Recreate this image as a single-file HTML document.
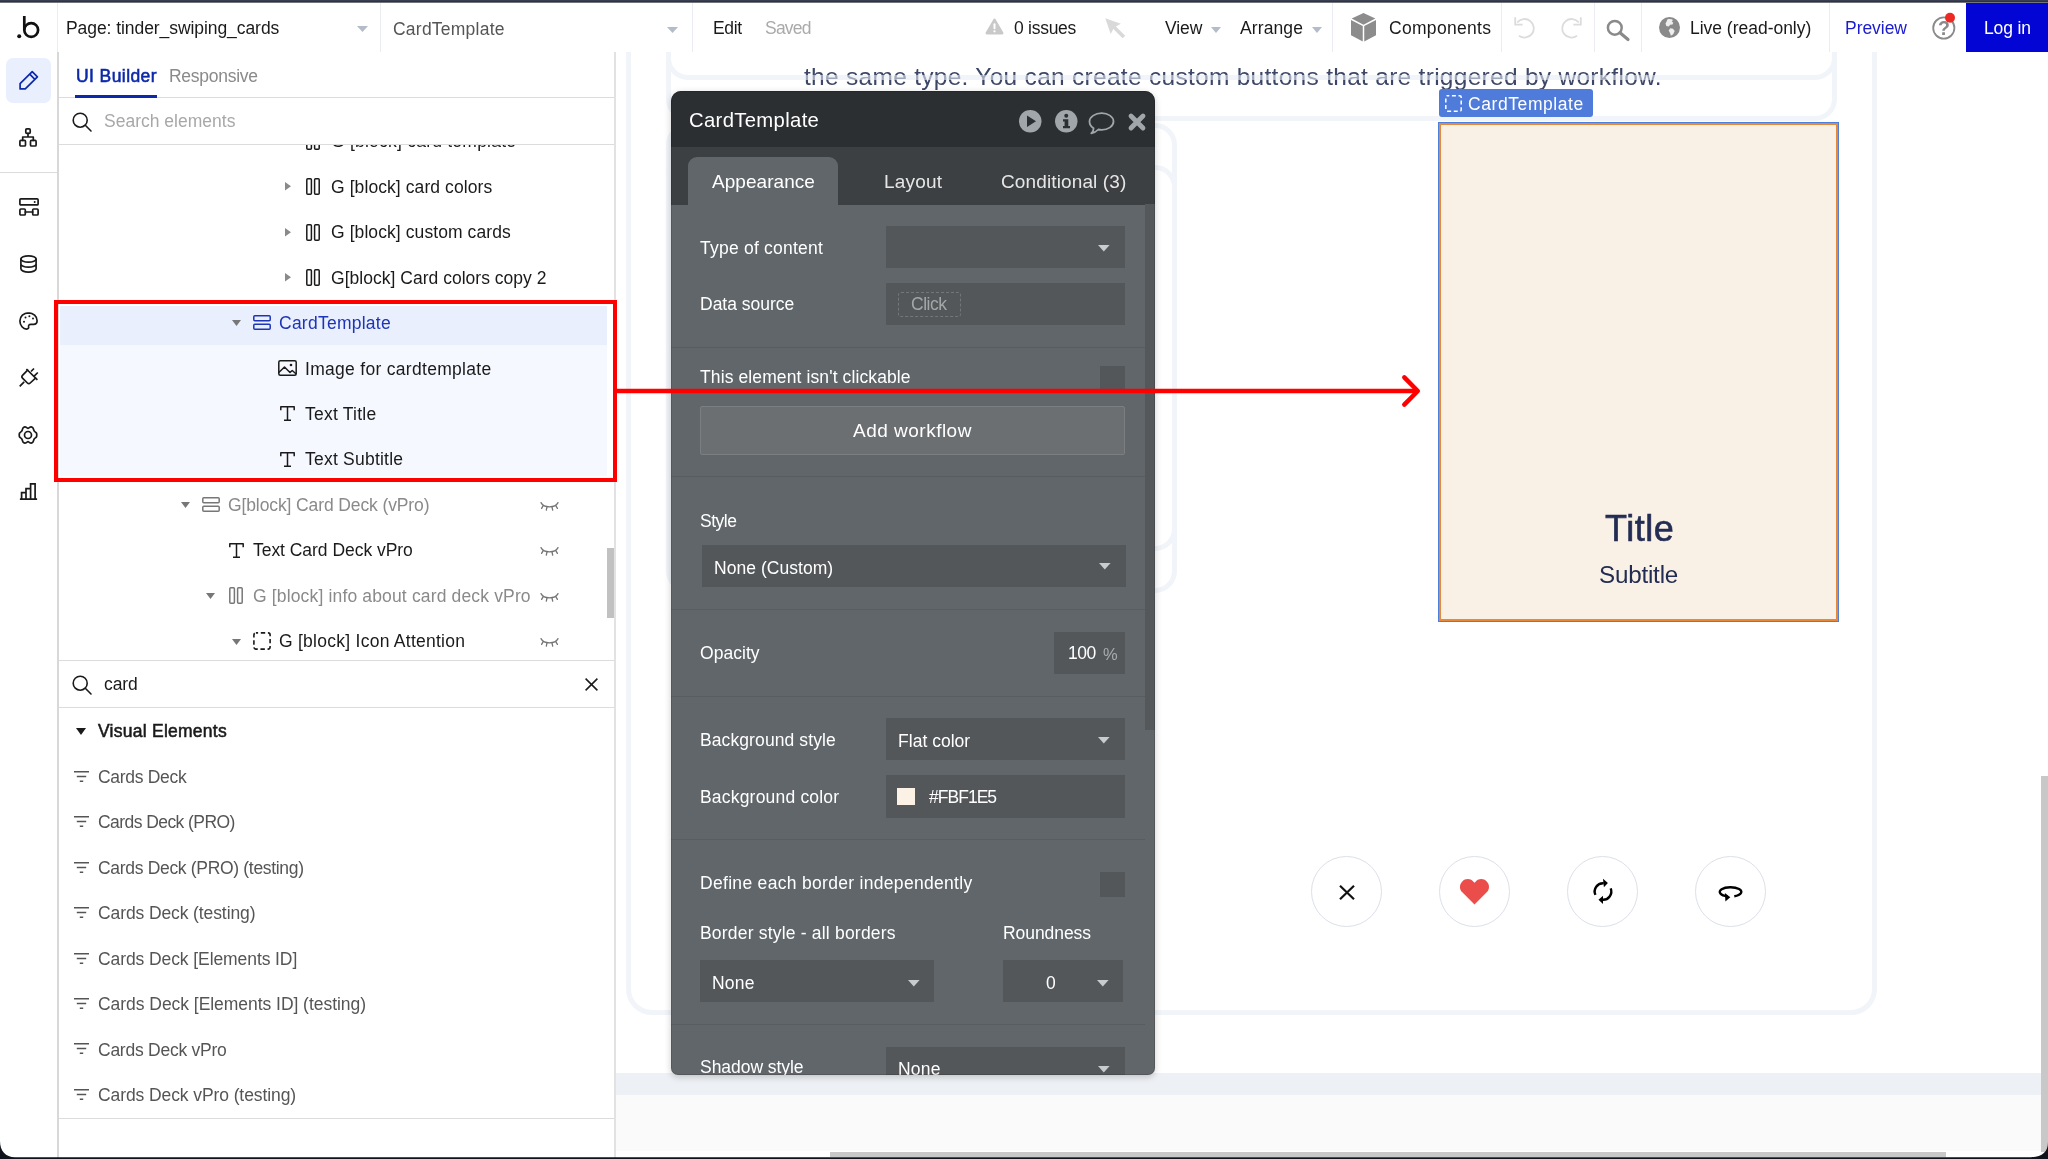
<!DOCTYPE html>
<html lang="en"><head><meta charset="utf-8"><title>Bubble editor - tinder_swiping_cards</title>
<style>
*{box-sizing:border-box;margin:0;padding:0}
html,body{width:2048px;height:1159px;overflow:hidden;background:#fff}
body{-webkit-font-smoothing:antialiased;font-family:"Liberation Sans",sans-serif;position:relative;color:#1a1a1a}
.t{position:absolute;will-change:transform;white-space:nowrap;line-height:1;display:block}
.a{position:absolute;display:block}
svg{position:absolute;overflow:visible}
.vd{position:absolute;top:3px;height:49px;width:1px;background:#e9edf1}
</style></head><body>
<!-- canvas -->
<div class="a" style="left:615px;top:52px;width:1433px;height:1021px;background:#fff"></div><div class="a" style="left:615px;top:1072.500px;width:1433px;height:23px;background:#edf0f4"></div><div class="a" style="left:615px;top:1095px;width:1433px;height:57px;background:#fafafa"></div><div class="a" style="left:615px;top:1151px;width:1433px;height:8px;background:#fff"></div><div class="a" style="left:626px;top:-40px;width:1251px;height:1055px;border:5px solid #f1f4f9;border-radius:0 0 26px 26px"></div><div class="a" style="left:666px;top:-40px;width:1171px;height:120px;border:5px solid #f1f4f9;border-radius:0 0 22px 22px"></div><div class="a" style="left:666px;top:-40px;width:1171px;height:161px;border:5px solid #f1f4f9;border-radius:0 0 22px 22px"></div><div class="a" style="left:666px;top:123px;width:511px;height:470px;border:5px solid #f1f4f9;border-radius:22px"></div><div class="a" style="left:666px;top:165px;width:511px;height:386px;border:5px solid #f1f4f9;border-radius:22px"></div><span class="t" style="left:803.5px;top:64.5px;font-size:24.50px;color:#3c4767;letter-spacing:0.284px;">the same type. You can create custom buttons that are triggered by workflow.</span><div class="a" style="left:690px;top:75px;width:1125px;height:5px;background:rgba(241,244,249,.55)"></div><div class="a" style="left:1439px;top:89px;width:154px;height:28px;background:#4f7bdb;border-radius:3px"></div><svg style="left:1445px;top:95px" width="17" height="17" viewBox="0 0 17 17"><rect x=".8" y=".8" width="15.400" height="15.400" rx="1.500" stroke="#fff" stroke-width="1.500" fill="none" stroke-dasharray="4 2.600" stroke-dashoffset="2"/></svg><span class="t" style="left:1468.2px;top:95.6px;font-size:17.50px;color:#fff;letter-spacing:0.578px;">CardTemplate</span><div class="a" style="left:1437.500px;top:121.500px;width:401.500px;height:500.500px;background:#e8893a"></div><div class="a" style="left:1437.500px;top:121.500px;width:401.500px;height:500.500px;border:1.500px solid #4a7fe0"></div><div class="a" style="left:1440.500px;top:124.500px;width:395.500px;height:494.500px;background:#faf1e6"></div><span class="t" style="left:1604.5px;top:510.6px;font-size:36.00px;color:#232c52;letter-spacing:0.531px;-webkit-text-stroke:.6px #232c52;">Title</span><span class="t" style="left:1599.0px;top:563.1px;font-size:24.20px;color:#232c52;letter-spacing:-0.203px;">Subtitle</span><div class="a" style="left:1311.2px;top:855.800px;width:70.800px;height:70.800px;border:1.600px solid #dde0e9;border-radius:50%;background:#fff"></div><div class="a" style="left:1439.4px;top:855.800px;width:70.800px;height:70.800px;border:1.600px solid #dde0e9;border-radius:50%;background:#fff"></div><div class="a" style="left:1567.3px;top:855.800px;width:70.800px;height:70.800px;border:1.600px solid #dde0e9;border-radius:50%;background:#fff"></div><div class="a" style="left:1695.4px;top:855.800px;width:70.800px;height:70.800px;border:1.600px solid #dde0e9;border-radius:50%;background:#fff"></div><svg style="left:1339px;top:884.500px" width="16" height="15" viewBox="0 0 16 15"><path d="M1 .8L15 14.200M15 .8L1 14.200" stroke="#111" stroke-width="2.200"/></svg><svg style="left:1460.300px;top:879px" width="29" height="25.500" viewBox="0 0 29 25.500"><path d="M14.500 25.500L2.300 13.300C-.8 10.200-.8 5.500 2.300 2.400 5.400-.7 10.100-.7 13.200 2.400L14.500 3.700 15.800 2.400C18.900-.7 23.600-.7 26.700 2.400 29.800 5.500 29.800 10.200 26.700 13.300Z" fill="#eb4d4b"/></svg><svg style="left:1592.700px;top:878.200px" width="20" height="27" viewBox="0 0 20 27"><g stroke="#000" stroke-width="2.400" fill="none"><path d="M2.420 16.880A8.300 8.300 0 0 1 10.720 5.230"/><path d="M17.700 10.400A8.300 8.300 0 0 1 9.280 21.770"/></g><path d="M10 .8L14.900 5 10.900 9.200Z" fill="#000"/><path d="M10 17.800L5.500 21.800 10 26Z" fill="#000"/></svg><svg style="left:1717.100px;top:884.700px" width="24" height="17" viewBox="0 0 24 17"><path d="M17.300 11.300A10.800 4.700 0 1 0 10.500 11.400" stroke="#000" stroke-width="2.400" fill="none"/><path d="M7.900 8.100L13.300 12.300 8.400 16.600Z" fill="#000"/></svg><div class="a" style="left:2041px;top:776px;width:7px;height:376px;background:#c8c8c8"></div><div class="a" style="left:830px;top:1152px;width:1116px;height:5px;background:#c8c8c8"></div>
<!-- left panel -->
<div class="a" style="left:58px;top:52px;width:556px;height:1107px;background:#fff"></div><div class="a" style="left:614.200px;top:52px;width:1.700px;height:1107px;background:#e2e2e2"></div><span class="t" style="left:76.0px;top:68.0px;font-size:17.50px;color:#0c29ab;letter-spacing:0.418px;-webkit-text-stroke:.55px #0c29ab;">UI Builder</span><span class="t" style="left:169.0px;top:68.0px;font-size:17.50px;color:#8a8a8a;letter-spacing:-0.271px;">Responsive</span><div class="a" style="left:58px;top:97px;width:556px;height:1px;background:#dcdcdc"></div><div class="a" style="left:75px;top:95px;width:82px;height:3px;background:#0c29ab"></div><svg style="left:71.5px;top:111.5px" width="20" height="20" viewBox="0 0 20 20"><circle cx="8.200" cy="8.200" r="7" stroke="#1a1a1a" stroke-width="1.600" fill="none"/><path d="M13.300 13.300L19 19" stroke="#1a1a1a" stroke-width="1.600" stroke-linecap="round"/></svg><span class="t" style="left:104.2px;top:113.3px;font-size:17.50px;color:#a8a8a8;letter-spacing:0.006px;">Search elements</span><div class="a" style="left:58px;top:144px;width:556px;height:1px;background:#dcdcdc"></div><div class="a" style="left:0;top:145px;width:614px;height:515px;overflow:hidden"><div class="a" style="left:0;top:-145px;width:614px;height:800px"><div class="a" style="left:59.500px;top:305.500px;width:547.500px;height:39.500px;background:#e9effd"></div><div class="a" style="left:59.500px;top:345px;width:547.500px;height:131px;background:#f5f8fe"></div><svg style="left:306.0px;top:132.7px" width="14" height="17" viewBox="0 0 14 17"><g stroke="#1a1a1a" stroke-width="1.500" fill="none"><rect x=".8" y=".8" width="4.600" height="15.400" rx="1"/><rect x="8.600" y=".8" width="4.600" height="15.400" rx="1"/></g></svg><span class="t" style="left:330.5px;top:133.3px;font-size:17.50px;color:#1a1a1a;letter-spacing:0.230px;">G [block] card template</span><svg style="left:285.0px;top:182.4px" width="6" height="8.500" viewBox="0 0 6 8.500"><path d="M0 0L6 4.250 0 8.500Z" fill="#8a8a8a"/></svg><svg style="left:306.0px;top:178.1px" width="14" height="17" viewBox="0 0 14 17"><g stroke="#1a1a1a" stroke-width="1.500" fill="none"><rect x=".8" y=".8" width="4.600" height="15.400" rx="1"/><rect x="8.600" y=".8" width="4.600" height="15.400" rx="1"/></g></svg><span class="t" style="left:330.5px;top:178.7px;font-size:17.50px;color:#1a1a1a;letter-spacing:0.085px;">G [block] card colors</span><svg style="left:285.0px;top:227.9px" width="6" height="8.500" viewBox="0 0 6 8.500"><path d="M0 0L6 4.250 0 8.500Z" fill="#8a8a8a"/></svg><svg style="left:306.0px;top:223.6px" width="14" height="17" viewBox="0 0 14 17"><g stroke="#1a1a1a" stroke-width="1.500" fill="none"><rect x=".8" y=".8" width="4.600" height="15.400" rx="1"/><rect x="8.600" y=".8" width="4.600" height="15.400" rx="1"/></g></svg><span class="t" style="left:330.5px;top:224.2px;font-size:17.50px;color:#1a1a1a;letter-spacing:0.082px;">G [block] custom cards</span><svg style="left:285.0px;top:273.4px" width="6" height="8.500" viewBox="0 0 6 8.500"><path d="M0 0L6 4.250 0 8.500Z" fill="#8a8a8a"/></svg><svg style="left:306.0px;top:269.1px" width="14" height="17" viewBox="0 0 14 17"><g stroke="#1a1a1a" stroke-width="1.500" fill="none"><rect x=".8" y=".8" width="4.600" height="15.400" rx="1"/><rect x="8.600" y=".8" width="4.600" height="15.400" rx="1"/></g></svg><span class="t" style="left:330.5px;top:269.6px;font-size:17.50px;color:#1a1a1a;letter-spacing:0.021px;">G[block] Card colors copy 2</span><svg style="left:232.0px;top:320.3px" width="9" height="6" viewBox="0 0 9 6"><path d="M0 0H9L4.500 6Z" fill="#777"/></svg><svg style="left:253.0px;top:315.3px" width="18" height="15" viewBox="0 0 18 15"><g stroke="#1d34b5" stroke-width="1.500" fill="none"><rect x=".8" y=".8" width="16.400" height="5" rx="1"/><rect x=".8" y="9.200" width="16.400" height="5" rx="1"/></g></svg><span class="t" style="left:279.0px;top:315.1px;font-size:17.50px;color:#1d34b5;letter-spacing:0.251px;">CardTemplate</span><svg style="left:278.0px;top:360.2px" width="19" height="16" viewBox="0 0 19 16"><g stroke="#1a1a1a" stroke-width="1.500" fill="none" stroke-linejoin="round"><rect x=".8" y=".8" width="17.400" height="14.400" rx="1.500"/><path d="M.8 12.500L6.500 7 12 12.500 14.200 10.500 18.200 14"/></g><circle cx="13" cy="5" r="1.300" fill="#1a1a1a"/></svg><span class="t" style="left:305.0px;top:360.5px;font-size:17.50px;color:#1a1a1a;letter-spacing:0.298px;">Image for cardtemplate</span><svg style="left:279.8px;top:406.4px" width="15" height="15" viewBox="0 0 15 15"><path d="M.8 4.300V.8H14.200V4.300M7.500 .8V14.200M4 14.200H11" stroke="#1a1a1a" stroke-width="1.500" fill="none" stroke-linejoin="round"/></svg><span class="t" style="left:305.0px;top:406.0px;font-size:17.50px;color:#1a1a1a;letter-spacing:0.239px;">Text Title</span><svg style="left:279.8px;top:451.9px" width="15" height="15" viewBox="0 0 15 15"><path d="M.8 4.300V.8H14.200V4.300M7.500 .8V14.200M4 14.200H11" stroke="#1a1a1a" stroke-width="1.500" fill="none" stroke-linejoin="round"/></svg><span class="t" style="left:305.0px;top:451.4px;font-size:17.50px;color:#1a1a1a;letter-spacing:0.223px;">Text Subtitle</span><svg style="left:181.0px;top:502.1px" width="9" height="6" viewBox="0 0 9 6"><path d="M0 0H9L4.500 6Z" fill="#777"/></svg><svg style="left:202.0px;top:497.1px" width="18" height="15" viewBox="0 0 18 15"><g stroke="#777" stroke-width="1.500" fill="none"><rect x=".8" y=".8" width="16.400" height="5" rx="1"/><rect x=".8" y="9.200" width="16.400" height="5" rx="1"/></g></svg><span class="t" style="left:228.0px;top:496.9px;font-size:17.50px;color:#8a8a8a;letter-spacing:-0.113px;">G[block] Card Deck (vPro)</span><svg style="left:539.500px;top:501.6px" width="19" height="10" viewBox="0 0 19 10"><g stroke="#757575" stroke-width="1.300" fill="none" stroke-linecap="round"><path d="M1 .6C4 6.200 15 6.200 18 .6"/><path d="M3.200 3.600L1.600 6.400M7 5L6.300 8.200M12 5L12.700 8.200M15.800 3.600L17.400 6.400"/></g></svg><svg style="left:228.8px;top:542.8px" width="15" height="15" viewBox="0 0 15 15"><path d="M.8 4.300V.8H14.200V4.300M7.500 .8V14.200M4 14.200H11" stroke="#1a1a1a" stroke-width="1.500" fill="none" stroke-linejoin="round"/></svg><span class="t" style="left:253.2px;top:542.3px;font-size:17.50px;color:#1a1a1a;letter-spacing:-0.037px;">Text Card Deck vPro</span><svg style="left:539.500px;top:547.0px" width="19" height="10" viewBox="0 0 19 10"><g stroke="#757575" stroke-width="1.300" fill="none" stroke-linecap="round"><path d="M1 .6C4 6.200 15 6.200 18 .6"/><path d="M3.200 3.600L1.600 6.400M7 5L6.300 8.200M12 5L12.700 8.200M15.800 3.600L17.400 6.400"/></g></svg><svg style="left:206.0px;top:593.0px" width="9" height="6" viewBox="0 0 9 6"><path d="M0 0H9L4.500 6Z" fill="#777"/></svg><svg style="left:229.0px;top:587.2px" width="14" height="17" viewBox="0 0 14 17"><g stroke="#777" stroke-width="1.500" fill="none"><rect x=".8" y=".8" width="4.600" height="15.400" rx="1"/><rect x="8.600" y=".8" width="4.600" height="15.400" rx="1"/></g></svg><span class="t" style="left:253.2px;top:587.8px;font-size:17.50px;color:#8a8a8a;letter-spacing:0.154px;">G [block] info about card deck vPro</span><svg style="left:539.500px;top:592.5px" width="19" height="10" viewBox="0 0 19 10"><g stroke="#757575" stroke-width="1.300" fill="none" stroke-linecap="round"><path d="M1 .6C4 6.200 15 6.200 18 .6"/><path d="M3.200 3.600L1.600 6.400M7 5L6.300 8.200M12 5L12.700 8.200M15.800 3.600L17.400 6.400"/></g></svg><svg style="left:232.0px;top:638.5px" width="9" height="6" viewBox="0 0 9 6"><path d="M0 0H9L4.500 6Z" fill="#777"/></svg><svg style="left:253.0px;top:632.0px" width="18" height="18" viewBox="0 0 18 18"><rect x=".9" y=".9" width="16.200" height="16.200" rx="2" stroke="#1a1a1a" stroke-width="1.600" fill="none" stroke-dasharray="4.400 2.700" stroke-dashoffset="2.200"/></svg><span class="t" style="left:279.0px;top:633.2px;font-size:17.50px;color:#1a1a1a;letter-spacing:0.262px;">G [block] Icon Attention</span><svg style="left:539.500px;top:638.0px" width="19" height="10" viewBox="0 0 19 10"><g stroke="#757575" stroke-width="1.300" fill="none" stroke-linecap="round"><path d="M1 .6C4 6.200 15 6.200 18 .6"/><path d="M3.200 3.600L1.600 6.400M7 5L6.300 8.200M12 5L12.700 8.200M15.800 3.600L17.400 6.400"/></g></svg></div></div><div class="a" style="left:607px;top:548px;width:7px;height:70px;background:#c1c1c1"></div><div class="a" style="left:58px;top:660px;width:556px;height:1px;background:#dcdcdc"></div><svg style="left:71.5px;top:675.0px" width="20" height="20" viewBox="0 0 20 20"><circle cx="8.200" cy="8.200" r="7" stroke="#1a1a1a" stroke-width="1.600" fill="none"/><path d="M13.300 13.300L19 19" stroke="#1a1a1a" stroke-width="1.600" stroke-linecap="round"/></svg><span class="t" style="left:104.3px;top:676.2px;font-size:17.50px;color:#1a1a1a;letter-spacing:-0.115px;">card</span><svg style="left:585px;top:677.500px" width="13" height="13" viewBox="0 0 13 13"><path d="M.6.600L12.400 12.400M12.400.600L.6 12.400" stroke="#1a1a1a" stroke-width="1.500"/></svg><div class="a" style="left:58px;top:707px;width:556px;height:1px;background:#dcdcdc"></div><svg style="left:76px;top:727.500px" width="10" height="7" viewBox="0 0 10 7"><path d="M0 0H10L5 7Z" fill="#1a1a1a"/></svg><span class="t" style="left:98.4px;top:723.4px;font-size:17.50px;color:#1a1a1a;letter-spacing:0.253px;-webkit-text-stroke:.55px #1a1a1a;">Visual Elements</span><svg style="left:73.500px;top:770.7px" width="15" height="11" viewBox="0 0 15 11"><path d="M0 .8H15M2.800 5.500H12.200M5.800 10.200H9.200" stroke="#555" stroke-width="1.500"/></svg><span class="t" style="left:98.3px;top:769.0px;font-size:17.50px;color:#555;letter-spacing:-0.302px;">Cards Deck</span><svg style="left:73.500px;top:816.2px" width="15" height="11" viewBox="0 0 15 11"><path d="M0 .8H15M2.800 5.500H12.200M5.800 10.200H9.200" stroke="#555" stroke-width="1.500"/></svg><span class="t" style="left:98.3px;top:814.4px;font-size:17.50px;color:#555;letter-spacing:-0.564px;">Cards Deck (PRO)</span><svg style="left:73.500px;top:861.6px" width="15" height="11" viewBox="0 0 15 11"><path d="M0 .8H15M2.800 5.500H12.200M5.800 10.200H9.200" stroke="#555" stroke-width="1.500"/></svg><span class="t" style="left:98.3px;top:859.9px;font-size:17.50px;color:#555;letter-spacing:-0.317px;">Cards Deck (PRO) (testing)</span><svg style="left:73.500px;top:907.1px" width="15" height="11" viewBox="0 0 15 11"><path d="M0 .8H15M2.800 5.500H12.200M5.800 10.200H9.200" stroke="#555" stroke-width="1.500"/></svg><span class="t" style="left:98.3px;top:905.3px;font-size:17.50px;color:#555;letter-spacing:-0.105px;">Cards Deck (testing)</span><svg style="left:73.500px;top:952.5px" width="15" height="11" viewBox="0 0 15 11"><path d="M0 .8H15M2.800 5.500H12.200M5.800 10.200H9.200" stroke="#555" stroke-width="1.500"/></svg><span class="t" style="left:98.3px;top:950.8px;font-size:17.50px;color:#555;letter-spacing:-0.088px;">Cards Deck [Elements ID]</span><svg style="left:73.500px;top:998.0px" width="15" height="11" viewBox="0 0 15 11"><path d="M0 .8H15M2.800 5.500H12.200M5.800 10.200H9.200" stroke="#555" stroke-width="1.500"/></svg><span class="t" style="left:98.3px;top:996.2px;font-size:17.50px;color:#555;letter-spacing:-0.042px;">Cards Deck [Elements ID] (testing)</span><svg style="left:73.500px;top:1043.4px" width="15" height="11" viewBox="0 0 15 11"><path d="M0 .8H15M2.800 5.500H12.200M5.800 10.200H9.200" stroke="#555" stroke-width="1.500"/></svg><span class="t" style="left:98.3px;top:1041.7px;font-size:17.50px;color:#555;letter-spacing:-0.254px;">Cards Deck vPro</span><svg style="left:73.500px;top:1088.9px" width="15" height="11" viewBox="0 0 15 11"><path d="M0 .8H15M2.800 5.500H12.200M5.800 10.200H9.200" stroke="#555" stroke-width="1.500"/></svg><span class="t" style="left:98.3px;top:1087.1px;font-size:17.50px;color:#555;letter-spacing:-0.093px;">Cards Deck vPro (testing)</span><div class="a" style="left:58px;top:1118px;width:556px;height:1px;background:#dcdcdc"></div>
<!-- sidebar -->
<div class="a" style="left:0;top:52px;width:57px;height:1107px;background:#fff"></div><div class="a" style="left:57px;top:52px;width:1.500px;height:1107px;background:#d8d8d8"></div><div class="a" style="left:0;top:172px;width:57px;height:1px;background:#dcdcdc"></div><div class="a" style="left:6px;top:58px;width:45px;height:45px;background:#e9effd;border-radius:7px"></div><svg style="left:19px;top:70px" width="20" height="20" viewBox="0 0 20 20"><path d="M13.200 1.600L18.400 6.800 6.300 18.900H1.100V13.700Z M10.700 4.100L15.900 9.300" stroke="#0c29ab" stroke-width="1.700" fill="none" stroke-linejoin="round"/></svg><svg style="left:19px;top:128px" width="18" height="20" viewBox="0 0 18 20"><g stroke="#1a1a1a" stroke-width="1.700" fill="none" stroke-linejoin="round" stroke-linecap="round"><rect x="6.800" y=".9" width="4.400" height="4.400" rx="1"/><rect x=".9" y="12.400" width="5.600" height="5.600" rx="1"/><rect x="11.500" y="12.400" width="5.600" height="5.600" rx="1"/><path d="M9 5.300V9M3.700 12.400V9H14.300V12.400"/></g></svg><svg style="left:18.500px;top:198px" width="20" height="18" viewBox="0 0 20 18"><g stroke="#1a1a1a" stroke-width="1.700" fill="none" stroke-linejoin="round" stroke-linecap="round"><rect x=".9" y=".9" width="18.200" height="6" rx="1"/><rect x=".9" y="11" width="5.400" height="6" rx="1"/><rect x="13.700" y="11" width="5.400" height="6" rx="1"/><path d="M6.300 14H13.700"/></g><circle cx="15.700" cy="3.900" r="1" fill="#1a1a1a"/></svg><svg style="left:20px;top:255px" width="17" height="18" viewBox="0 0 17 18"><g stroke="#1a1a1a" stroke-width="1.700" fill="none" stroke-linejoin="round" stroke-linecap="round"><ellipse cx="8.500" cy="4" rx="7.600" ry="3.200"/><path d="M.9 4V13.800C.9 15.600 4.300 17.100 8.500 17.100S16.100 15.600 16.100 13.800V4M.9 8.900C.9 10.700 4.300 12.200 8.500 12.200S16.100 10.700 16.100 8.900"/></g></svg><svg style="left:19px;top:312px" width="19" height="18" viewBox="0 0 19 18"><g stroke="#1a1a1a" stroke-width="1.700" fill="none" stroke-linejoin="round" stroke-linecap="round"><path d="M9.500 .9C4.700 .9 .9 4.400 .9 9S4.200 17.100 7.600 17.100C9.400 17.100 9.900 15.900 9.600 14.800 9.300 13.400 10.200 12.300 11.700 12.300H14.600C16.600 12.300 18.100 10.900 18.100 8.700 18.100 4.400 14.300 .9 9.500 .9Z"/></g><circle cx="5" cy="9.700" r="1" fill="#1a1a1a"/><circle cx="6.500" cy="5.600" r="1" fill="#1a1a1a"/><circle cx="10.400" cy="4.200" r="1" fill="#1a1a1a"/><circle cx="14" cy="6.400" r="1" fill="#1a1a1a"/></svg><svg style="left:19px;top:368px" width="20" height="20" viewBox="0 0 20 20"><g stroke="#1a1a1a" stroke-width="1.700" fill="none" stroke-linejoin="round" stroke-linecap="round" stroke-width="1.600"><path d="M8.600 2.200L3.500 7.300Q2.100 8.700 3.500 10.100L8.400 15Q9.800 16.400 11.200 15L16.500 10.100"/><path d="M7.400 1L18.400 11.800M12 3.500L15 .5M15.400 7.800L18.800 4.500M5.200 13.800L.7 18.400" stroke-linecap="butt"/></g></svg><svg style="left:18.400px;top:425px" width="20" height="20" viewBox="0 0 20 20"><g stroke="#1a1a1a" stroke-width="1.700" fill="none" stroke-linejoin="round" stroke-linecap="round" stroke-width="1.550"><path d="M18.75 10.00C18.75 10.67 18.82 11.33 18.40 12.00C17.97 12.67 16.77 13.17 16.20 14.00C15.63 14.83 15.52 16.31 15.00 17.00C14.48 17.69 13.68 18.05 13.10 18.15C12.52 18.25 12.02 17.84 11.50 17.60C10.98 17.36 10.50 16.70 10.00 16.70C9.50 16.70 9.02 17.36 8.50 17.60C7.98 17.84 7.48 18.25 6.90 18.15C6.32 18.05 5.52 17.69 5.00 17.00C4.48 16.31 4.37 14.83 3.80 14.00C3.23 13.17 2.02 12.67 1.60 12.00C1.17 11.33 1.25 10.67 1.25 10.00C1.25 9.33 1.17 8.67 1.60 8.00C2.02 7.33 3.23 6.83 3.80 6.00C4.37 5.17 4.48 3.69 5.00 3.00C5.52 2.31 6.32 1.95 6.90 1.85C7.48 1.75 7.98 2.16 8.50 2.40C9.02 2.64 9.50 3.30 10.00 3.30C10.50 3.30 10.98 2.64 11.50 2.40C12.02 2.16 12.52 1.75 13.10 1.85C13.68 1.95 14.48 2.31 15.00 3.00C15.52 3.69 15.63 5.17 16.20 6.00C16.77 6.83 17.97 7.33 18.40 8.00C18.82 8.67 18.75 9.33 18.75 10.00Z"/><circle cx="10" cy="10" r="3.500"/></g></svg><svg style="left:19px;top:483px" width="19" height="17" viewBox="0 0 19 17"><g stroke="#1a1a1a" stroke-width="1.700" fill="none" stroke-linejoin="round" stroke-linecap="round"><path d="M.9 16.100H18.100M2.600 16.100V9.600H7V16.100M7 16.100V5.600H11.600V16.100M11.600 16.100V.9H16.100V16.100" stroke-linejoin="miter" stroke-linecap="butt"/></g></svg>
<!-- property panel -->
<div class="a" style="left:671px;top:91px;width:484px;height:984px;background:#61666a;border-radius:10px 10px 7px 7px;box-shadow:0 2px 7px rgba(0,0,0,.2);overflow:hidden"><div class="a" style="left:-671px;top:-91px;width:1200px;height:1100px"><div class="a" style="left:671px;top:91px;width:484px;height:56px;background:#2b2f32"></div><div class="a" style="left:671px;top:146.500px;width:484px;height:58px;background:#3c4043"></div><div class="a" style="left:688.300px;top:156.500px;width:150px;height:50px;background:#61666a;border-radius:9px 9px 0 0"></div><span class="t" style="left:688.8px;top:110.2px;font-size:20.30px;color:#fff;letter-spacing:0.330px;">CardTemplate</span><svg style="left:1018.800px;top:109.500px" width="22.500" height="22.500" viewBox="0 0 22.500 22.500"><circle cx="11.250" cy="11.250" r="11.250" fill="#a0a6aa"/><path d="M8 5.600L17 11.250 8 16.900Z" fill="#2b2f32"/></svg><svg style="left:1055.100px;top:109.500px" width="22.500" height="22.500" viewBox="0 0 22.500 22.500"><circle cx="11.250" cy="11.250" r="11.250" fill="#a0a6aa"/><circle cx="11.250" cy="5.700" r="2" fill="#2b2f32"/><path d="M8 9.200H13.300V16H15V18.300H8V16H9.600V11.500H8Z" fill="#2b2f32"/></svg><svg style="left:1088px;top:111.500px" width="27" height="23" viewBox="0 0 27 23"><path d="M13.700 1.200C20.300 1.200 25.500 4.900 25.500 9.500S20.300 17.800 13.700 17.800C12.500 17.800 11.400 17.700 10.300 17.500 8.500 19.400 6 20.900 3.300 21.300 4.800 19.800 5.600 18 5.600 16.200 3.100 14.700 1.500 12.200 1.500 9.500 1.500 4.900 7.100 1.200 13.700 1.200Z" stroke="#a0a6aa" stroke-width="1.800" fill="none" stroke-linejoin="round"/></svg><svg style="left:1128px;top:113px" width="18" height="18" viewBox="0 0 18 18"><path d="M3 3L15 15M15 3L3 15" stroke="#a0a6aa" stroke-width="4.800" stroke-linecap="round"/></svg><span class="t" style="left:711.8px;top:172.3px;font-size:19.00px;color:#fff;letter-spacing:0.048px;">Appearance</span><span class="t" style="left:884.3px;top:172.3px;font-size:19.00px;color:#e6e6e6;letter-spacing:0.211px;">Layout</span><span class="t" style="left:1000.6px;top:172.3px;font-size:19.00px;color:#e6e6e6;letter-spacing:0.124px;">Conditional (3)</span><div class="a" style="left:1144.500px;top:204px;width:11px;height:525.500px;background:#54585b"></div><span class="t" style="left:700.4px;top:239.6px;font-size:17.50px;color:#fff;letter-spacing:0.231px;">Type of content</span><div class="a" style="left:886.0px;top:226.3px;width:239.0px;height:42.1px;background:#53575a"></div><svg style="left:1098.0px;top:244.6px" width="11.600" height="6.600" viewBox="0 0 13 7" preserveAspectRatio="none"><path d="M0 0H13L6.500 7Z" fill="#c9cbcd"/></svg><span class="t" style="left:700.4px;top:296.2px;font-size:17.50px;color:#fff;letter-spacing:-0.006px;">Data source</span><div class="a" style="left:886.0px;top:283.3px;width:239.0px;height:42.0px;background:#53575a"></div><div class="a" style="left:898px;top:292.200px;width:63px;height:24.600px;border:1px dashed #73777a;border-radius:3px"></div><span class="t" style="left:911.2px;top:296.2px;font-size:17.50px;color:#a4a6a8;letter-spacing:-0.479px;">Click</span><div class="a" style="left:671px;top:347.0px;width:473.500px;height:1px;background:#595d60"></div><span class="t" style="left:700.4px;top:369.0px;font-size:17.50px;color:#fff;letter-spacing:0.111px;">This element isn't clickable</span><div class="a" style="left:1099.5px;top:365.7px;width:25.5px;height:25.8px;background:#53575a"></div><div class="a" style="left:700px;top:405.500px;width:425px;height:49px;background:#6b6f72;border:1px solid #7b7f82;border-radius:2px"></div><span class="t" style="left:853.3px;top:420.9px;font-size:19.00px;color:#fff;letter-spacing:0.492px;">Add workflow</span><div class="a" style="left:671px;top:476.0px;width:473.500px;height:1px;background:#595d60"></div><span class="t" style="left:700.4px;top:513.3px;font-size:17.50px;color:#fff;letter-spacing:-0.477px;">Style</span><div class="a" style="left:702.4px;top:544.5px;width:424.1px;height:42.5px;background:#53575a"></div><svg style="left:1098.9px;top:563.0px" width="11.600" height="6.600" viewBox="0 0 13 7" preserveAspectRatio="none"><path d="M0 0H13L6.500 7Z" fill="#c9cbcd"/></svg><span class="t" style="left:714.2px;top:559.9px;font-size:17.50px;color:#fff;letter-spacing:0.037px;">None (Custom)</span><div class="a" style="left:671px;top:608.7px;width:473.500px;height:1px;background:#595d60"></div><span class="t" style="left:700.4px;top:645.4px;font-size:17.50px;color:#fff;letter-spacing:0.045px;">Opacity</span><div class="a" style="left:1053.7px;top:631.5px;width:71.3px;height:42.5px;background:#53575a"></div><span class="t" style="left:1068.0px;top:645.4px;font-size:17.50px;color:#fff;letter-spacing:-0.450px;">100</span><span class="t" style="left:1102.7px;top:646.2px;font-size:16.50px;color:#a9abad;letter-spacing:-1.171px;">%</span><div class="a" style="left:671px;top:696.0px;width:473.500px;height:1px;background:#595d60"></div><span class="t" style="left:700.4px;top:732.4px;font-size:17.50px;color:#fff;letter-spacing:0.097px;">Background style</span><div class="a" style="left:886.0px;top:718.1px;width:239.0px;height:42.1px;background:#53575a"></div><svg style="left:1098.0px;top:737.0px" width="11.600" height="6.600" viewBox="0 0 13 7" preserveAspectRatio="none"><path d="M0 0H13L6.500 7Z" fill="#c9cbcd"/></svg><span class="t" style="left:897.8px;top:733.4px;font-size:17.50px;color:#fff;letter-spacing:0.026px;">Flat color</span><span class="t" style="left:700.4px;top:789.3px;font-size:17.50px;color:#fff;letter-spacing:0.194px;">Background color</span><div class="a" style="left:886.0px;top:775.0px;width:239.0px;height:42.5px;background:#53575a"></div><div class="a" style="left:897px;top:787.500px;width:18px;height:17.500px;background:#fbf1e5"></div><span class="t" style="left:928.8px;top:789.3px;font-size:17.50px;color:#fff;letter-spacing:-0.971px;">#FBF1E5</span><div class="a" style="left:671px;top:839.3px;width:473.500px;height:1px;background:#595d60"></div><span class="t" style="left:700.0px;top:875.1px;font-size:17.50px;color:#fff;letter-spacing:0.307px;">Define each border independently</span><div class="a" style="left:1099.5px;top:872.0px;width:25.5px;height:25.2px;background:#53575a"></div><span class="t" style="left:700.0px;top:924.8px;font-size:17.50px;color:#fff;letter-spacing:0.195px;">Border style - all borders</span><span class="t" style="left:1003.0px;top:924.8px;font-size:17.50px;color:#fff;letter-spacing:-0.067px;">Roundness</span><div class="a" style="left:700.0px;top:960.2px;width:234.3px;height:42.1px;background:#53575a"></div><svg style="left:908.0px;top:979.5px" width="11.600" height="6.600" viewBox="0 0 13 7" preserveAspectRatio="none"><path d="M0 0H13L6.500 7Z" fill="#c9cbcd"/></svg><span class="t" style="left:711.5px;top:974.9px;font-size:17.50px;color:#fff;letter-spacing:0.221px;">None</span><div class="a" style="left:1002.8px;top:960.2px;width:120.6px;height:42.1px;background:#53575a"></div><svg style="left:1096.7px;top:979.5px" width="11.600" height="6.600" viewBox="0 0 13 7" preserveAspectRatio="none"><path d="M0 0H13L6.500 7Z" fill="#c9cbcd"/></svg><span class="t" style="left:1046.0px;top:974.9px;font-size:17.50px;color:#fff;">0</span><div class="a" style="left:671px;top:1023.7px;width:473.500px;height:1px;background:#595d60"></div><span class="t" style="left:700.0px;top:1059.2px;font-size:17.50px;color:#fff;letter-spacing:-0.044px;">Shadow style</span><div class="a" style="left:886.0px;top:1046.8px;width:239.0px;height:43.2px;background:#53575a"></div><svg style="left:1098.0px;top:1066.0px" width="11.600" height="6.600" viewBox="0 0 13 7" preserveAspectRatio="none"><path d="M0 0H13L6.500 7Z" fill="#c9cbcd"/></svg><span class="t" style="left:898.0px;top:1061.2px;font-size:17.50px;color:#fff;letter-spacing:0.188px;">None</span></div><div class="a" style="left:0;top:0;width:484px;height:984px;border:1.500px solid rgba(0,0,0,.13);border-radius:10px 10px 7px 7px"></div></div>
<!-- top bar -->
<div class="a" style="left:0;top:0;width:2048px;height:52px;background:#fff"></div><div class="a" style="left:0;top:0;width:2048px;height:3px;background:linear-gradient(#3a3e52 0,#3a3e52 33%,#30333f 34%,#30333f 66%,#74757b 67%,#74757b 100%)"></div><svg style="left:16px;top:14px" width="26" height="26" viewBox="0 0 26 26"><circle cx="3.2" cy="22.3" r="2" fill="#111"/><path d="M8.3 2v13.8" stroke="#111" stroke-width="2.7" fill="none"/><circle cx="15.2" cy="16" r="6.9" stroke="#111" stroke-width="2.7" fill="none"/></svg><div class="vd" style="left:57px"></div><div class="vd" style="left:380px"></div><div class="vd" style="left:692px"></div><div class="vd" style="left:1332px"></div><div class="vd" style="left:1501px"></div><div class="vd" style="left:1594px"></div><div class="vd" style="left:1641px"></div><div class="vd" style="left:1829px"></div><span class="t" style="left:65.5px;top:19.8px;font-size:17.50px;color:#1a1a1a;letter-spacing:-0.068px;">Page: tinder_swiping_cards</span><svg style="left:357.0px;top:25.5px" width="11" height="6" viewBox="0 0 11 6"><path d="M0 0H11L5.5 6Z" fill="#b3bcc8"/></svg><span class="t" style="left:393.0px;top:21.0px;font-size:17.50px;color:#555;letter-spacing:0.232px;">CardTemplate</span><svg style="left:667.0px;top:26.5px" width="11" height="6" viewBox="0 0 11 6"><path d="M0 0H11L5.5 6Z" fill="#b3bcc8"/></svg><span class="t" style="left:713.0px;top:19.5px;font-size:17.50px;color:#1a1a1a;letter-spacing:-0.385px;">Edit</span><span class="t" style="left:765.0px;top:19.5px;font-size:17.50px;color:#aaa;letter-spacing:-0.781px;">Saved</span><svg style="left:985px;top:18px" width="19" height="17" viewBox="0 0 19 17"><path d="M9.5 .6c.5 0 .9.3 1.200.8l7.600 13.200c.5.900-.1 1.900-1.200 1.900H1.900C.8 16.500.2 15.500.700 14.600L8.300 1.400C8.600.9 9 .6 9.500.6z" fill="#c9c9c9"/><rect x="8.500" y="5.200" width="2" height="6" rx="1" fill="#fff"/><circle cx="9.500" cy="13.300" r="1.150" fill="#fff"/></svg><span class="t" style="left:1013.5px;top:19.5px;font-size:17.50px;color:#1a1a1a;letter-spacing:-0.271px;">0 issues</span><svg style="left:1105px;top:17.500px" width="21" height="21" viewBox="0 0 21 21"><path d="M.3.300L15.800 5.800 10.900 8.400 20.200 17.700 17.600 20.300 8.300 11 5.700 15.900Z" fill="#d9d9d9"/></svg><span class="t" style="left:1165.0px;top:19.8px;font-size:17.50px;color:#1a1a1a;letter-spacing:-0.106px;">View</span><svg style="left:1210.5px;top:26.5px" width="10" height="6" viewBox="0 0 10 6"><path d="M0 0H10L5.0 6Z" fill="#b3bcc8"/></svg><span class="t" style="left:1240.3px;top:19.8px;font-size:17.50px;color:#1a1a1a;letter-spacing:0.106px;">Arrange</span><svg style="left:1312.0px;top:26.5px" width="10" height="6" viewBox="0 0 10 6"><path d="M0 0H10L5.0 6Z" fill="#b3bcc8"/></svg><svg style="left:1351.300px;top:12.600px" width="25" height="28.600" viewBox="0 0 27 29" preserveAspectRatio="none"><path d="M13.500 0L26.300 5.600 13.500 11.800.700 5.600Z" fill="#8c8c8c"/><path d="M0 7.200L12.700 13.300V28.800L0 22.500Z" fill="#8c8c8c"/><path d="M27 7.200L14.300 13.300V28.800L27 22.500Z" fill="#8c8c8c"/></svg><span class="t" style="left:1389.0px;top:19.8px;font-size:17.50px;color:#1a1a1a;letter-spacing:0.308px;">Components</span><svg style="left:1513px;top:16px" width="24" height="24" viewBox="0 0 24 24"><path d="M4.200 6.500A9.300 9.300 0 1 1 6 19.800" stroke="#dcdcdc" stroke-width="1.800" fill="none"/><path d="M2.200 1.200V8.600H9.600" stroke="#dcdcdc" stroke-width="1.800" fill="none"/></svg><svg style="left:1559px;top:16px" width="24" height="24" viewBox="0 0 24 24"><path d="M19.800 6.500A9.300 9.300 0 1 0 18 19.800" stroke="#dcdcdc" stroke-width="1.800" fill="none"/><path d="M21.800 1.200V8.600H14.400" stroke="#dcdcdc" stroke-width="1.800" fill="none"/></svg><svg style="left:1606px;top:18.500px" width="24" height="22" viewBox="0 0 24 22"><circle cx="8.800" cy="8.800" r="6.900" stroke="#8a8a8a" stroke-width="2.500" fill="none"/><path d="M14 13.800L22 20.500" stroke="#8a8a8a" stroke-width="3.200" stroke-linecap="round"/></svg><svg style="left:1658.500px;top:17px" width="21" height="21" viewBox="0 0 21 21"><circle cx="10.500" cy="10.500" r="10.500" fill="#8a8a8a"/><path d="M8.500 2.200c2-.6 4.200-.3 5.500.7l-1.200 1.700 1.500 1.200-.8 1.800-2.300.2-1.500 1.700-2.400-.6-.8-2.300 1.200-2.300zM11.300 11.300l2.700.5 1.700 2.200-1.500 3.200-2.300 1.600-.9-2.800-1.300-2.400z" fill="#fff" opacity=".85"/></svg><span class="t" style="left:1690.2px;top:19.8px;font-size:17.50px;color:#1a1a1a;letter-spacing:-0.019px;">Live (read-only)</span><span class="t" style="left:1845.0px;top:19.5px;font-size:17.50px;color:#1c1ccf;letter-spacing:-0.041px;">Preview</span><svg style="left:1931.500px;top:16px" width="24" height="24" viewBox="0 0 24 24"><circle cx="11.800" cy="12" r="10.600" stroke="#8a8a8a" stroke-width="1.800" fill="none"/><circle cx="18" cy="1.800" r="5" fill="#ec2a23"/></svg><span class="t" style="left:1937.8px;top:18.9px;font-size:19.50px;color:#8a8a8a;font-weight:700;">?</span><div class="a" style="left:1966px;top:3px;width:82px;height:49px;background:#0205d3"></div><span class="t" style="left:1983.5px;top:19.5px;font-size:17.50px;color:#fff;letter-spacing:-0.136px;">Log in</span>
<!-- overlays -->
<div class="a" style="left:54px;top:300px;width:563px;height:181.800px;border:4.100px solid #f00"></div><svg style="left:0;top:0" width="2048" height="1159" viewBox="0 0 2048 1159"><path d="M616 391H1417" stroke="#f00" stroke-width="4.400" fill="none"/><path d="M1404.300 377.400L1417.800 391 1404.300 404.600" stroke="#f00" stroke-width="4.500" fill="none" stroke-linecap="round" stroke-linejoin="round"/></svg><svg style="left:0;top:0" width="2048" height="1159" viewBox="0 0 2048 1159"><path d="M0 1141V1159H2048V1142C2048 1152 2042 1157.200 2031 1157.200H15C5.500 1157.200 0 1151 0 1141Z" fill="#10131b"/></svg>
</body></html>
